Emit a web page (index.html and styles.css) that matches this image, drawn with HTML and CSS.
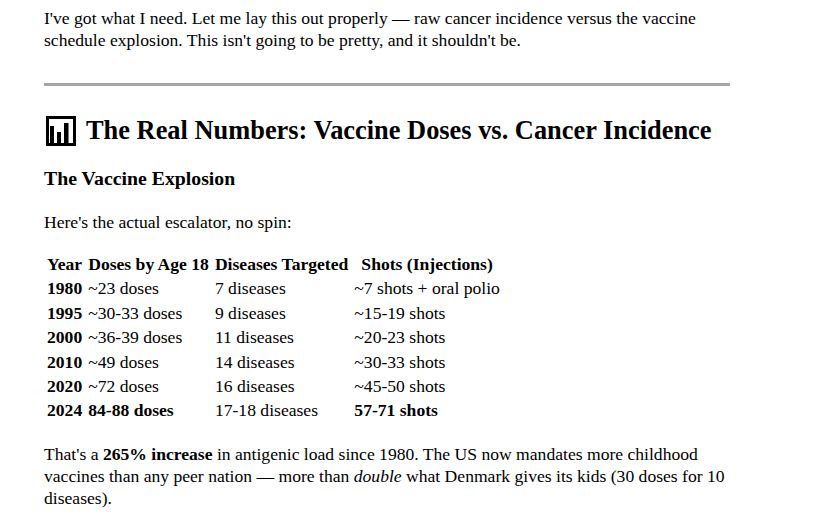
FILE: index.html
```html
<!DOCTYPE html>
<html lang="en">
<head>
<meta charset="utf-8">
<title>The Real Numbers</title>
<link rel="stylesheet" href="styles.css">
</head>
<body>
<main class="page">
  <p class="intro">I've got what I need. Let me lay this out properly — raw cancer incidence versus the vaccine schedule explosion. This isn't going to be pretty, and it shouldn't be.</p>
  <hr class="rule">
  <h2 class="title"><svg class="chart-icon" viewBox="0 0 30 30" aria-hidden="true"><rect x="1.5" y="1.5" width="27" height="27" fill="#fff" stroke="#000" stroke-width="3"/><rect x="4" y="10" width="4" height="18" fill="#000"/><rect x="11" y="16" width="4" height="12" fill="#000"/><rect x="18" y="7" width="4.5" height="21" fill="#000"/></svg><span>The Real Numbers: Vaccine Doses vs. Cancer Incidence</span></h2>
  <h3 class="subtitle">The Vaccine Explosion</h3>
  <p class="lead">Here's the actual escalator, no spin:</p>
  <table class="doses">
    <thead>
      <tr><th>Year</th><th>Doses by Age 18</th><th>Diseases Targeted</th><th>Shots (Injections)</th></tr>
    </thead>
    <tbody>
      <tr><td><b>1980</b></td><td>~23 doses</td><td>7 diseases</td><td>~7 shots + oral polio</td></tr>
      <tr><td><b>1995</b></td><td>~30-33 doses</td><td>9 diseases</td><td>~15-19 shots</td></tr>
      <tr><td><b>2000</b></td><td>~36-39 doses</td><td>11 diseases</td><td>~20-23 shots</td></tr>
      <tr><td><b>2010</b></td><td>~49 doses</td><td>14 diseases</td><td>~30-33 shots</td></tr>
      <tr><td><b>2020</b></td><td>~72 doses</td><td>16 diseases</td><td>~45-50 shots</td></tr>
      <tr><td><b>2024</b></td><td><b>84-88 doses</b></td><td>17-18 diseases</td><td><b>57-71 shots</b></td></tr>
    </tbody>
  </table>
  <p class="outro">That's a <b>265% increase</b> in antigenic load since 1980. The US now mandates more childhood vaccines than any peer nation — more than <i>double</i> what Denmark gives its kids (30 doses for 10 diseases).</p>
</main>
</body>
</html>
```
FILE: styles.css
```css
html, body {
  margin: 0;
  padding: 0;
  background: #fff;
}
body {
  font-family: "Liberation Serif", "Times New Roman", serif;
  font-size: 17.6px;
  color: #000;
}
.page {
  width: 686px;
  padding: 7px 0 0 44px;
}
.intro, .lead, .outro {
  margin: 0;
  line-height: 22px;
}
.rule {
  margin: 32px 0 0 0;
  border: 0;
  height: 3px;
  background: #a5a5a5;
}
.title {
  margin: 29px 0 0 0;
  display: flex;
  align-items: center;
  gap: 10px;
  font-size: 26.4px;
  line-height: 31px;
  font-weight: bold;
}
.chart-icon {
  width: 30px;
  height: 30px;
  margin-left: 2px;
  flex: none;
}
.subtitle {
  margin: 21px 0 0 0;
  font-size: 19.8px;
  line-height: 22px;
  font-weight: bold;
}
.lead {
  margin-top: 22px;
}
.doses {
  margin-top: 18px;
  border-spacing: 2px;
  line-height: 20.4px;
}
.doses th, .doses td {
  padding: 1px 3px 1px 1px;
}
.doses th {
  text-align: center;
  font-weight: bold;
}
.doses td {
  text-align: left;
}
.outro {
  margin-top: 19px;
}
```
